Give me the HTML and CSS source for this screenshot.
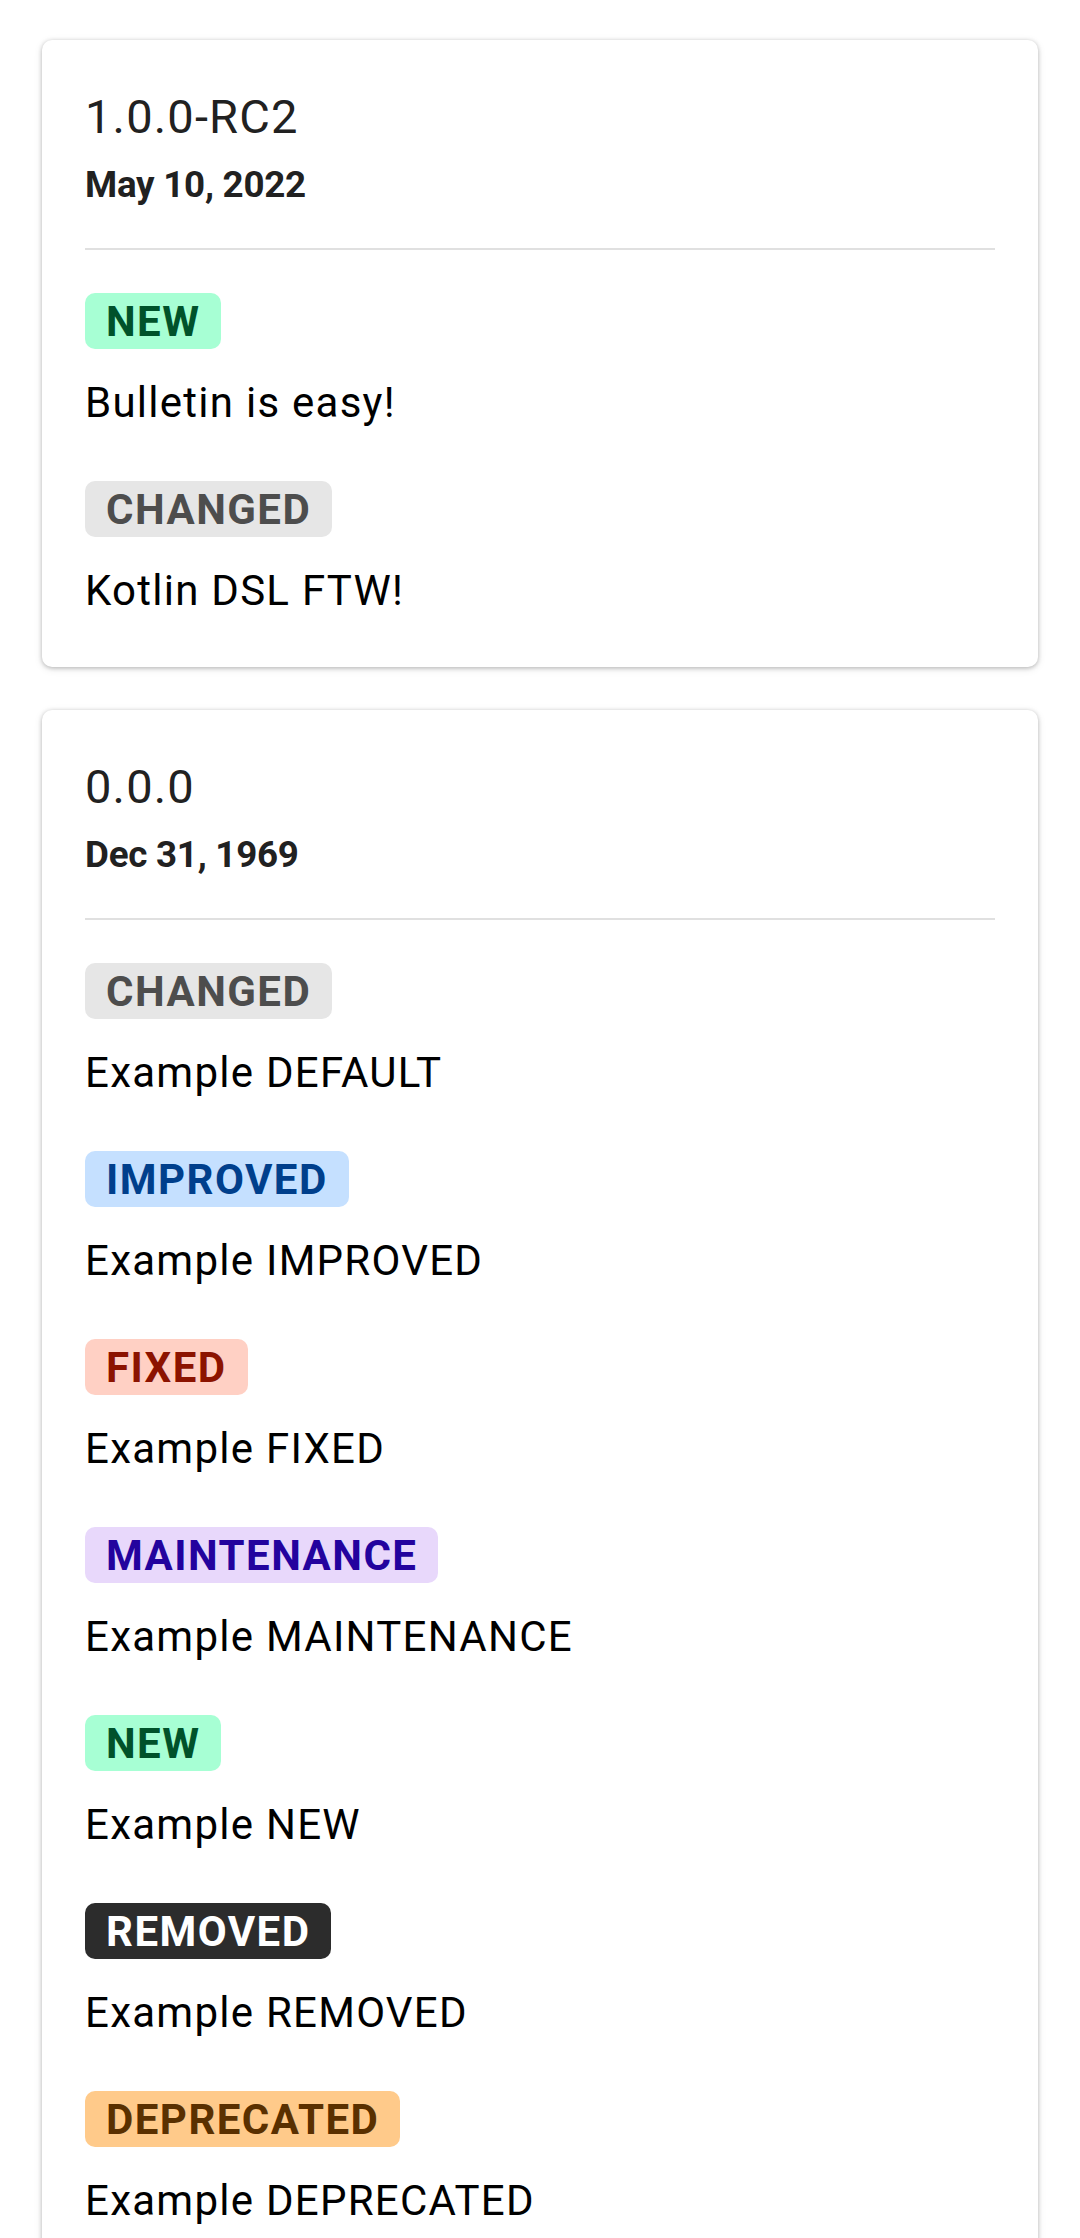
FILE: index.html
```html
<!DOCTYPE html>
<html lang="en">
<head>
<meta charset="utf-8">
<title>Changelog</title>
<link rel="stylesheet" href="styles.css">
</head>
<body>
<main class="feed">
  <section class="card">
    <h2 class="version">1.0.0-RC2</h2>
    <div class="date">May 10, 2022</div>
    <div class="divider"></div>
    <div class="entry">
      <span class="badge badge-new">NEW</span>
      <p class="text">Bulletin is easy!</p>
    </div>
    <div class="entry">
      <span class="badge badge-changed">CHANGED</span>
      <p class="text">Kotlin DSL FTW!</p>
    </div>
  </section>
  <section class="card">
    <h2 class="version">0.0.0</h2>
    <div class="date">Dec 31, 1969</div>
    <div class="divider"></div>
    <div class="entry">
      <span class="badge badge-changed">CHANGED</span>
      <p class="text">Example DEFAULT</p>
    </div>
    <div class="entry">
      <span class="badge badge-improved">IMPROVED</span>
      <p class="text">Example IMPROVED</p>
    </div>
    <div class="entry">
      <span class="badge badge-fixed">FIXED</span>
      <p class="text">Example FIXED</p>
    </div>
    <div class="entry">
      <span class="badge badge-maintenance">MAINTENANCE</span>
      <p class="text">Example MAINTENANCE</p>
    </div>
    <div class="entry">
      <span class="badge badge-new">NEW</span>
      <p class="text">Example NEW</p>
    </div>
    <div class="entry">
      <span class="badge badge-removed">REMOVED</span>
      <p class="text">Example REMOVED</p>
    </div>
    <div class="entry">
      <span class="badge badge-deprecated">DEPRECATED</span>
      <p class="text">Example DEPRECATED</p>
    </div>
  </section>
</main>
</body>
</html>
```
FILE: styles.css
```css
html, body {
  margin: 0;
  padding: 0;
  background: #ffffff;
}

body {
  font-family: Roboto, "Noto Sans", "Liberation Sans", sans-serif;
  color: #000000;
}

.feed {
  display: flex;
  flex-direction: column;
  gap: 43px;
  padding: 40px 42px;
}

.card {
  background: #ffffff;
  border-radius: 10px;
  box-shadow: 0 1px 4px rgba(0, 0, 0, 0.24), 0 2px 8px rgba(0, 0, 0, 0.1);
  padding: 49px 43px 52px 43px;
}

.version {
  margin: 0;
  font-size: 47px;
  line-height: 55px;
  font-weight: 400;
  letter-spacing: 0.025em;
  color: #212121;
}

.date {
  margin-top: 19px;
  font-size: 36.75px;
  line-height: 43px;
  font-weight: 700;
  letter-spacing: -0.25px;
  color: #212121;
}

.divider {
  height: 2px;
  background: #e0e0e0;
  margin: 42px 0 43px 0;
}

.entry + .entry {
  margin-top: 54px;
}

.badge {
  display: inline-block;
  box-sizing: border-box;
  height: 56px;
  line-height: 54px;
  padding: 2px 21px 0 21px;
  border-radius: 10px;
  font-size: 42px;
  font-weight: 700;
  letter-spacing: 0.035em;
}

.text {
  margin: 29px 0 0 0;
  font-size: 42px;
  line-height: 49px;
  letter-spacing: 0.03em;
  color: #000000;
}

.badge-new { background: #a7ffd4; color: #00522a; }
.badge-changed { background: #e6e6e6; color: #4d4d4d; }
.badge-improved { background: #c5e0ff; color: #003f8c; }
.badge-fixed { background: #ffd0c4; color: #8c1300; }
.badge-maintenance { background: #e8d8fb; color: #23039e; }
.badge-removed { background: #2c2c2c; color: #ffffff; }
.badge-deprecated { background: #ffca8a; color: #5a3000; }
```
